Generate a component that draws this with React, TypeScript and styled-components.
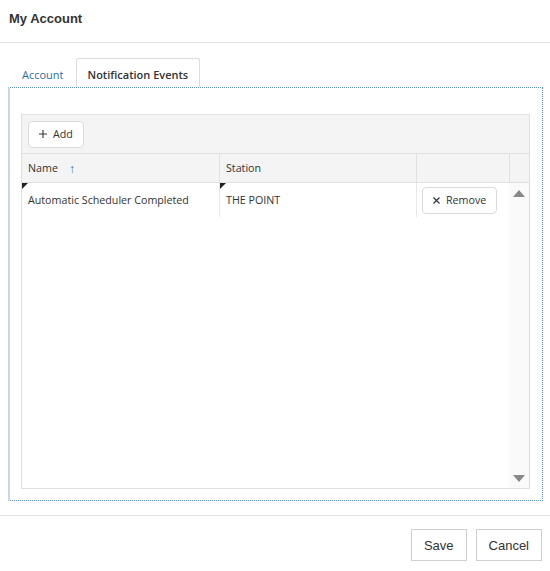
import styled, { createGlobalStyle } from 'styled-components';

const GlobalStyle = createGlobalStyle`
  html, body {
    margin: 0;
    padding: 0;
    background: #fff;
    font-family: "Liberation Sans", Arial, sans-serif;
  }
`;

const Dialog = styled.div`
  width: 550px;
  height: 571px;
  display: flex;
  flex-direction: column;
  background: #fff;
`;

const Header = styled.div`
  height: 43px;
  display: flex;
  align-items: center;
  padding: 0 9px 6px;
  border-bottom: 1px solid #e2e2e2;
  box-sizing: border-box;
  flex-shrink: 0;
`;

const Title = styled.h1`
  margin: 0;
  font-size: 13px;
  font-weight: bold;
  color: #333;
`;

const Body = styled.div`
  padding: 15px 7px 0 8px;
  display: flex;
  flex-direction: column;
`;

const TabStrip = styled.div`
  display: flex;
  height: 29px;
  padding-left: 2px;
  font-family: "Open Sans", "Noto Sans", sans-serif;
  font-size: 11px;
`;

const Tab = styled.div<{ $active?: boolean }>`
  display: flex;
  align-items: center;
  padding: 2px 11px 0;
  box-sizing: border-box;
  color: ${(p) => (p.$active ? '#333' : '#2e6da4')};
  font-weight: ${(p) => (p.$active ? 600 : 400)};
  border: 1px solid ${(p) => (p.$active ? '#dcdcdc' : 'transparent')};
  border-bottom: none;
  border-radius: 3px 3px 0 0;
  background: #fff;
`;

const Panel = styled.div`
  height: 414px;
  box-sizing: border-box;
  border-top: 1px dotted #5a8ec4;
  border-right: 1px dotted #5a8ec4;
  border-bottom: 1px dotted #5a8ec4;
  border-left: 2px solid #c8d8ea;
  padding: 26px 13px 11px 11px;
  display: flex;
`;

const Grid = styled.div`
  flex: 1;
  border: 1px solid #e0e0e0;
  display: flex;
  flex-direction: column;
  font-family: "Open Sans", "Noto Sans", sans-serif;
  font-size: 10.7px;
  color: #333;
`;

const Toolbar = styled.div`
  height: 39px;
  box-sizing: border-box;
  background: #f4f4f4;
  border-bottom: 1px solid #e0e0e0;
  display: flex;
  align-items: center;
  padding: 0 6px;
`;

const SmallButton = styled.button`
  display: inline-flex;
  align-items: center;
  gap: 6px;
  height: 27px;
  box-sizing: border-box;
  padding: 0 10px;
  background: #fff;
  border: 1px solid #dadada;
  border-radius: 4px;
  font-family: inherit;
  font-size: 10.7px;
  color: #333;
`;

const Row = styled.div<{ $cols?: string }>`
  display: grid;
  grid-template-columns: ${(p) => p.$cols || '197px 197px 93px 1fr'};
`;

const HeadCell = styled.div`
  height: 29px;
  box-sizing: border-box;
  background: #f4f4f4;
  border-bottom: 1px solid #e0e0e0;
  border-left: 1px solid #e0e0e0;
  display: flex;
  align-items: center;
  padding: 0 6px;
  &:first-child {
    border-left: none;
  }
`;

const SortArrow = styled.span`
  color: #2e6da4;
  margin-left: 11px;
  font-size: 12px;
`;

const Cell = styled.div<{ $dirty?: boolean }>`
  position: relative;
  height: 34px;
  box-sizing: border-box;
  border-left: 1px solid #e8e8e8;
  display: flex;
  align-items: center;
  padding: 0 6px;
  &:first-child {
    border-left: none;
  }
  &::before {
    content: '';
    display: ${(p) => (p.$dirty ? 'block' : 'none')};
    position: absolute;
    top: 0;
    left: 0;
    border-top: 6px solid #222;
    border-right: 6px solid transparent;
  }
`;

const CommandCell = styled(Cell)`
  padding: 0 5px;
`;

const Content = styled.div`
  flex: 1;
  display: flex;
  min-height: 0;
`;

const Rows = styled.div`
  flex: 1;
`;

const Scrollbar = styled.div`
  width: 20px;
  background: #fafafa;
  display: flex;
  flex-direction: column;
  justify-content: space-between;
  align-items: center;
  padding: 7px 0 6px;
  box-sizing: border-box;
`;

const Arrow = styled.div<{ $down?: boolean }>`
  width: 0;
  height: 0;
  border-left: 6px solid transparent;
  border-right: 6px solid transparent;
  ${(p) =>
    p.$down
      ? 'border-top: 7px solid #888;'
      : 'border-bottom: 7px solid #888;'}
`;

const Footer = styled.div`
  margin-top: 14px;
  border-top: 1px solid #e2e2e2;
  display: flex;
  justify-content: flex-end;
  gap: 9px;
  padding: 13px 8px 0;
`;

const DialogButton = styled.button`
  height: 32px;
  padding: 0 12px;
  background: #fff;
  border: 1px solid #cfcfcf;
  border-radius: 0;
  font-family: "Liberation Sans", Arial, sans-serif;
  font-size: 13px;
  color: #333;
`;

function PlusIcon() {
  return (
    <svg width="8" height="8" viewBox="0 0 8 8">
      <path d="M4 0v8M0 4h8" stroke="#333" strokeWidth="1.1" />
    </svg>
  );
}

function CloseIcon() {
  return (
    <svg width="7" height="7" viewBox="0 0 7 7">
      <path d="M0.5 0.5l6 6M6.5 0.5l-6 6" stroke="#333" strokeWidth="1.2" />
    </svg>
  );
}

function App() {
  return (
    <>
      <GlobalStyle />
      <Dialog>
        <Header>
          <Title>My Account</Title>
        </Header>
        <Body>
          <TabStrip>
            <Tab>Account</Tab>
            <Tab $active>Notification Events</Tab>
          </TabStrip>
          <Panel>
            <Grid>
              <Toolbar>
                <SmallButton>
                  <PlusIcon />
                  Add
                </SmallButton>
              </Toolbar>
              <Row>
                <HeadCell>
                  Name<SortArrow>↑</SortArrow>
                </HeadCell>
                <HeadCell>Station</HeadCell>
                <HeadCell />
                <HeadCell />
              </Row>
              <Content>
                <Rows>
                  <Row $cols="197px 197px 93px">
                    <Cell $dirty>Automatic Scheduler Completed</Cell>
                    <Cell $dirty>THE POINT</Cell>
                    <CommandCell>
                      <SmallButton>
                        <CloseIcon />
                        Remove
                      </SmallButton>
                    </CommandCell>
                  </Row>
                </Rows>
                <Scrollbar>
                  <Arrow />
                  <Arrow $down />
                </Scrollbar>
              </Content>
            </Grid>
          </Panel>
        </Body>
        <Footer>
          <DialogButton>Save</DialogButton>
          <DialogButton>Cancel</DialogButton>
        </Footer>
      </Dialog>
    </>
  );
}

export default App;
